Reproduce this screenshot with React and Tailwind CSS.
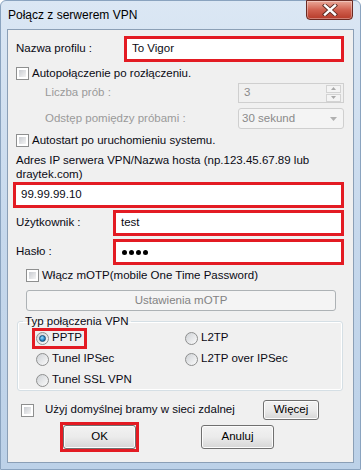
import React from "react";

const font = { fontFamily: '"Liberation Sans", Arial, sans-serif' };

function Check({ className = "" }) {
  return (
    <span className={"block w-[13px] h-[13px] shrink-0 border border-[#8e8f8f] bg-white p-[2px] " + className}>
      <span className="block w-full h-full bg-linear-to-br from-[#c9ccd1] to-[#f4f4f4]" />
    </span>
  );
}

function Radio({ checked = false }) {
  return (
    <span className="flex items-center justify-center w-[13px] h-[13px] shrink-0 rounded-full border border-[#8e8f8f] bg-linear-to-br from-[#cfd2d6] to-[#fbfbfb]">
      {checked && (
        <span className="block w-[7px] h-[7px] rounded-full border border-[#1b4f78] bg-[radial-gradient(circle_at_40%_35%,#9fe0ff,#2a8ccc_55%,#0d4a7a)]" />
      )}
    </span>
  );
}

function Btn({ children, className = "", disabled = false }) {
  return (
    <div
      className={
        "flex items-center justify-center rounded-[3px] border " +
        (disabled
          ? "border-[#adb2b5] bg-[#f4f4f4] text-[#838383] "
          : "border-[#707070] bg-linear-to-b from-[#f2f2f2] via-[#ebebeb] to-[#d6d6d6] text-black shadow-[inset_0_0_0_1px_#fcfcfc] ") +
        className
      }
    >
      {children}
    </div>
  );
}

function SpinArrows() {
  return (
    <div className="flex flex-col gap-[1px] mr-[2px]">
      <span className="flex items-center justify-center w-[15px] h-[8px] border border-[#d3d3d3] bg-[#f4f4f4]">
        <svg width="5" height="3" viewBox="0 0 5 3"><path d="M0 3 L2.5 0 L5 3 Z" fill="#a9a9a9" /></svg>
      </span>
      <span className="flex items-center justify-center w-[15px] h-[8px] border border-[#d3d3d3] bg-[#f4f4f4]">
        <svg width="5" height="3" viewBox="0 0 5 3"><path d="M0 0 L2.5 3 L5 0 Z" fill="#a9a9a9" /></svg>
      </span>
    </div>
  );
}

export default function App() {
  return (
    <div className="w-[361px] h-[470px] bg-white" style={font}>
      <div className="relative w-[361px] h-[470px] rounded-t-[6px] border border-[#8aa3bf] bg-linear-to-b from-[#dbe7f4] via-[#c6d8ec] to-[#bcd1e8] flex flex-col">
        {/* Title bar */}
        <div className="h-[28px] flex items-center pl-[7px] text-[12px] text-black">
          Połącz z serwerem VPN
        </div>
        {/* Close button */}
        <div className="absolute right-[7px] top-[-1px] w-[47px] h-[20px] rounded-b-[4px] border border-[#6b2a22] bg-linear-to-b from-[#e9a899] via-[#d0604f] to-[#b63a29] shadow-[inset_0_0_0_1px_rgba(255,255,255,0.35)] flex items-center justify-center">
          <svg width="16" height="12" viewBox="0 0 16 12">
            <path d="M3 1.5 L13 10.5 M13 1.5 L3 10.5" stroke="#5a2a22" strokeWidth="4.2" strokeLinecap="square" />
            <path d="M3 1.5 L13 10.5 M13 1.5 L3 10.5" stroke="#ffffff" strokeWidth="2.4" strokeLinecap="square" />
          </svg>
        </div>

        {/* Content */}
        <div className="ml-[6px] w-[347px] h-[434px] border border-[#8b9fb6] bg-[#f0f0f0] text-[11.5px] text-[#0a0a14] flex flex-col">
          {/* Row 1 */}
          <div className="flex items-center h-[26px] mt-[6px]">
            <span className="ml-[8px] w-[108px]">Nazwa profilu :</span>
            <div className="w-[220px] h-full border-[3px] border-[#e31b23] bg-white flex items-center pl-[5px]">To Vigor</div>
          </div>
          {/* Row 2 */}
          <div className="flex items-center h-[13px] mt-[5px] ml-[8px]">
            <Check />
            <span className="ml-[3px]">Autopołączenie po rozłączeniu.</span>
          </div>
          {/* Row 3 */}
          <div className="flex items-center h-[20px] mt-[3px]">
            <span className="ml-[37px] flex-1 text-[#9a9a9a]">Liczba prób :</span>
            <div className="w-[106px] h-full mr-[9px] border border-[#cfcfcf] bg-[#f0f0f0] flex items-center justify-between pl-[5px] text-[#8a8a8a]">
              <span>3</span>
              <SpinArrows />
            </div>
          </div>
          {/* Row 4 */}
          <div className="flex items-center h-[21px] mt-[5px]">
            <span className="ml-[37px] flex-1 text-[#9a9a9a]">Odstęp pomiędzy próbami :</span>
            <div className="w-[106px] h-full mr-[9px] rounded-[3px] border border-[#cfcfcf] bg-[#f4f4f4] flex items-center justify-between pl-[3px] pr-[6px] text-[#8a8a8a]">
              <span>30 sekund</span>
              <svg width="7" height="4" viewBox="0 0 7 4"><path d="M0 0 L3.5 4 L7 0 Z" fill="#b0b0b0" /></svg>
            </div>
          </div>
          {/* Row 5 */}
          <div className="flex items-center h-[13px] mt-[5px] ml-[8px]">
            <Check />
            <span className="ml-[3px]">Autostart po uruchomieniu systemu.</span>
          </div>
          {/* Row 6 */}
          <div className="ml-[8px] mt-[6px] leading-[14px]">
            Adres IP serwera VPN/Nazwa hosta (np.123.45.67.89 lub
            <br />
            draytek.com)
          </div>
          {/* Row 7 */}
          <div className="ml-[5px] mt-[1px] w-[331px] h-[26px] border-[3px] border-[#e31b23] bg-white flex items-center pl-[5px]">
            99.99.99.10
          </div>
          {/* Row 8 */}
          <div className="flex items-center h-[26px] mt-[2px]">
            <span className="ml-[8px] w-[97px]">Użytkownik :</span>
            <div className="w-[231px] h-full border-[3px] border-[#e31b23] bg-white flex items-center pl-[5px]">test</div>
          </div>
          {/* Row 9 */}
          <div className="flex items-center h-[26px] mt-[3px]">
            <span className="ml-[8px] w-[97px]">Hasło :</span>
            <div className="w-[231px] h-full border-[3px] border-[#e31b23] bg-white flex items-center pl-[6px] gap-[2px]">
              <span className="w-[5px] h-[5px] rounded-full bg-black" />
              <span className="w-[5px] h-[5px] rounded-full bg-black" />
              <span className="w-[5px] h-[5px] rounded-full bg-black" />
              <span className="w-[5px] h-[5px] rounded-full bg-black" />
            </div>
          </div>
          {/* Row 10 */}
          <div className="flex items-center h-[13px] mt-[4px] ml-[18px]">
            <Check />
            <span className="ml-[3px]">Włącz mOTP(mobile One Time Password)</span>
          </div>
          {/* Row 11 */}
          <Btn disabled className="ml-[18px] mt-[8px] w-[310px] h-[21px]">Ustawienia mOTP</Btn>
          {/* Row 12 group */}
          <fieldset className="ml-[9px] mt-[3px] w-[326px] h-[77px] rounded-[3px] border border-[#d5dfe5] shadow-[inset_0_0_0_1px_#ffffff]">
            <legend className="ml-[5px] px-[2px] leading-[14px]">Typ połączenia VPN</legend>
            <div className="grid grid-cols-[149px_1fr] auto-rows-[20px] gap-y-[1px] pl-[18px]">
              <div className="flex items-center">
                <div className="-ml-[4px] flex items-center h-[21px] border-[3px] border-[#e31b23] pl-[1px] pr-[2px]">
                  <Radio checked />
                  <span className="ml-[3px]">PPTP</span>
                </div>
              </div>
              <div className="flex items-center">
                <Radio />
                <span className="ml-[3px]">L2TP</span>
              </div>
              <div className="flex items-center">
                <Radio />
                <span className="ml-[3px]">Tunel IPSec</span>
              </div>
              <div className="flex items-center">
                <Radio />
                <span className="ml-[3px]">L2TP over IPSec</span>
              </div>
              <div className="flex items-center">
                <Radio />
                <span className="ml-[3px]">Tunel SSL VPN</span>
              </div>
            </div>
          </fieldset>
          {/* Row 13 */}
          <div className="flex items-center h-[20px] mt-[9px]">
            <Check className="ml-[13px]" />
            <span className="ml-[11px]">Użyj domyślnej bramy w sieci zdalnej</span>
            <Btn className="ml-auto mr-[34px] w-[56px] h-[20px]">Więcej</Btn>
          </div>
          {/* Row 14 */}
          <div className="flex items-center h-[30px] mt-[2px]">
            <div className="ml-[52px] w-[79px] h-[30px] border-[3px] border-[#e31b23] pl-[0px] py-[0px]">
              <Btn className="w-full h-full">OK</Btn>
            </div>
            <Btn className="ml-[62px] w-[73px] h-[24px]">Anuluj</Btn>
          </div>
        </div>
      </div>
    </div>
  );
}
